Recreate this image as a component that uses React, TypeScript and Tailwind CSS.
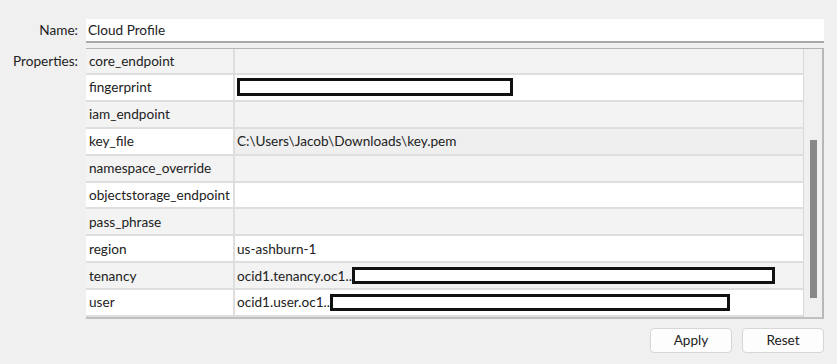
import React from 'react';

type Row = {
  key: string;
  value?: string;
  redact?: number;
  keyBg: string;
  valBg: string;
};

const rows: Row[] = [
  { key: 'core_endpoint', keyBg: 'bg-[#f3f3f3]', valBg: 'bg-[#f3f3f3]' },
  { key: 'fingerprint', redact: 276, keyBg: 'bg-white', valBg: 'bg-white' },
  { key: 'iam_endpoint', keyBg: 'bg-[#f3f3f3]', valBg: 'bg-[#f3f3f3]' },
  { key: 'key_file', value: 'C:\\Users\\Jacob\\Downloads\\key.pem', keyBg: 'bg-white', valBg: 'bg-[#efefef]' },
  { key: 'namespace_override', keyBg: 'bg-[#f3f3f3]', valBg: 'bg-[#f3f3f3]' },
  { key: 'objectstorage_endpoint', keyBg: 'bg-white', valBg: 'bg-white' },
  { key: 'pass_phrase', keyBg: 'bg-[#f3f3f3]', valBg: 'bg-[#f3f3f3]' },
  { key: 'region', value: 'us-ashburn-1', keyBg: 'bg-white', valBg: 'bg-white' },
  { key: 'tenancy', value: 'ocid1.tenancy.oc1..', redact: 423, keyBg: 'bg-[#f3f3f3]', valBg: 'bg-[#f3f3f3]' },
  { key: 'user', value: 'ocid1.user.oc1..', redact: 400, keyBg: 'bg-white', valBg: 'bg-white' },
];

function Redacted({ width, tall }: { width: number; tall?: boolean }) {
  return (
    <span
      className={`inline-block border-[3px] border-[#111] bg-white ${tall ? 'h-[18px]' : 'h-[17px]'}`}
      style={{ width }}
    />
  );
}

export default function App() {
  return (
    <div className="w-[837px] h-[364px] bg-[#f0f0f0] text-[13.6px] text-[#222] font-['Lato','Liberation_Sans',sans-serif] pt-[19px]">
      <div className="flex items-start">
        <div className="w-[78px] h-[23px] flex items-center justify-end">Name:</div>
        <div className="ml-[8px] w-[738px] h-[24px] bg-white border-b-2 border-[#a8a8a8] flex items-center pl-[2px]">
          Cloud Profile
        </div>
      </div>

      <div className="flex items-start mt-[5px]">
        <div className="w-[78px] h-[26px] flex items-center justify-end">Properties:</div>
        <div className="ml-[8px] w-[738px] h-[271px] border-t border-[#b4b4b4] border-r-2 border-r-[#b8b8b8] border-b-2 border-b-[#c0c0c0] flex">
          <div className="w-[718px] flex flex-col border-r border-[#d8d8d8]">
            {rows.map((r, i) => (
              <div
                key={r.key}
                className={`flex border-b-2 border-[#dedede] ${i === 0 ? 'h-[26px]' : 'h-[27px]'} ${i === rows.length - 1 ? 'border-b-0' : ''}`}
              >
                <div className={`w-[149px] ${r.keyBg} border-r-2 border-[#dedede] flex items-center pl-[3px]`}>{r.key}</div>
                <div className={`flex-1 ${r.valBg} flex items-center pl-[2px]`}>
                  {r.value}
                  {r.redact ? <Redacted width={r.redact} tall={i === 1} /> : null}
                </div>
              </div>
            ))}
          </div>
          <div className="flex-1 bg-[#f0f0f0] relative">
            <div className="absolute left-[6px] top-[91px] w-[7px] h-[158px] bg-[#888]" />
          </div>
        </div>
      </div>

      <div className="flex justify-end gap-[10px] mt-[9px] pr-[13px]">
        <button className="w-[82px] h-[25px] bg-[#fdfdfd] border border-[#d6d6d6] rounded-[4px] text-[#222]">Apply</button>
        <button className="w-[82px] h-[25px] bg-[#fdfdfd] border border-[#d6d6d6] rounded-[4px] text-[#222]">Reset</button>
      </div>
    </div>
  );
}
